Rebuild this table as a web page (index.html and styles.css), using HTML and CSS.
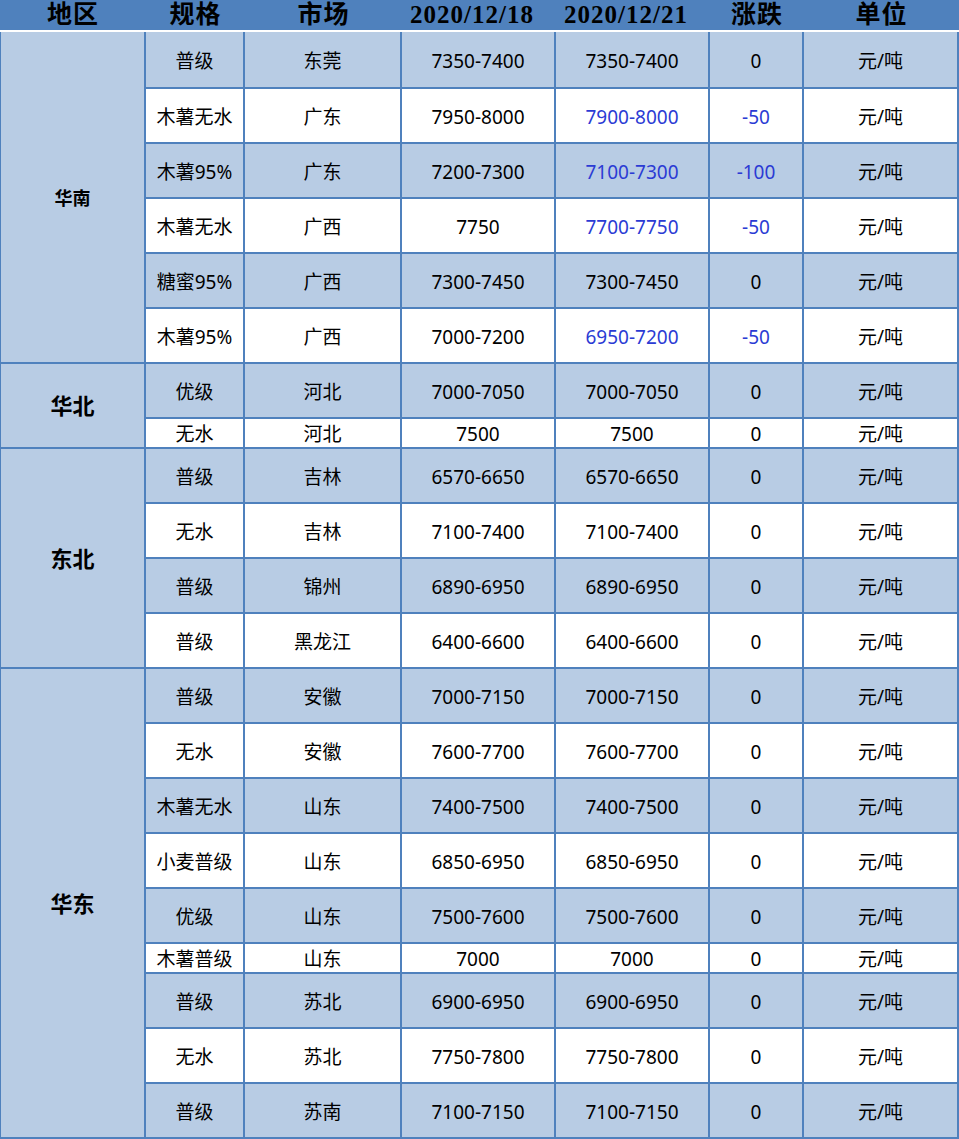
FILE: index.html
```html
<!DOCTYPE html>
<html lang="zh-CN">
<head>
<meta charset="utf-8">
<title>价格表</title>
<link rel="stylesheet" href="styles.css">
</head>
<body>
<div class="sheet">
  <div class="head">
    <div class="h">地区</div>
    <div class="h">规格</div>
    <div class="h">市场</div>
    <div class="h date">2020/12/18</div>
    <div class="h date">2020/12/21</div>
    <div class="h">涨跌</div>
    <div class="h">单位</div>
  </div>
  <div class="body">
    <div class="region small r6">华南</div>
    <div class="c alt">普级</div><div class="c alt">东莞</div><div class="c alt">7350-7400</div><div class="c alt">7350-7400</div><div class="c alt">0</div><div class="c alt last">元/吨</div>
    <div class="c">木薯无水</div><div class="c">广东</div><div class="c">7950-8000</div><div class="c blue">7900-8000</div><div class="c blue">-50</div><div class="c last">元/吨</div>
    <div class="c alt">木薯95%</div><div class="c alt">广东</div><div class="c alt">7200-7300</div><div class="c alt blue">7100-7300</div><div class="c alt blue">-100</div><div class="c alt last">元/吨</div>
    <div class="c">木薯无水</div><div class="c">广西</div><div class="c">7750</div><div class="c blue">7700-7750</div><div class="c blue">-50</div><div class="c last">元/吨</div>
    <div class="c alt">糖蜜95%</div><div class="c alt">广西</div><div class="c alt">7300-7450</div><div class="c alt">7300-7450</div><div class="c alt">0</div><div class="c alt last">元/吨</div>
    <div class="c">木薯95%</div><div class="c">广西</div><div class="c">7000-7200</div><div class="c blue">6950-7200</div><div class="c blue">-50</div><div class="c last">元/吨</div>

    <div class="region r2">华北</div>
    <div class="c alt">优级</div><div class="c alt">河北</div><div class="c alt">7000-7050</div><div class="c alt">7000-7050</div><div class="c alt">0</div><div class="c alt last">元/吨</div>
    <div class="c">无水</div><div class="c">河北</div><div class="c">7500</div><div class="c">7500</div><div class="c">0</div><div class="c last">元/吨</div>

    <div class="region r4">东北</div>
    <div class="c alt">普级</div><div class="c alt">吉林</div><div class="c alt">6570-6650</div><div class="c alt">6570-6650</div><div class="c alt">0</div><div class="c alt last">元/吨</div>
    <div class="c">无水</div><div class="c">吉林</div><div class="c">7100-7400</div><div class="c">7100-7400</div><div class="c">0</div><div class="c last">元/吨</div>
    <div class="c alt">普级</div><div class="c alt">锦州</div><div class="c alt">6890-6950</div><div class="c alt">6890-6950</div><div class="c alt">0</div><div class="c alt last">元/吨</div>
    <div class="c">普级</div><div class="c">黑龙江</div><div class="c">6400-6600</div><div class="c">6400-6600</div><div class="c">0</div><div class="c last">元/吨</div>

    <div class="region r9">华东</div>
    <div class="c alt">普级</div><div class="c alt">安徽</div><div class="c alt">7000-7150</div><div class="c alt">7000-7150</div><div class="c alt">0</div><div class="c alt last">元/吨</div>
    <div class="c">无水</div><div class="c">安徽</div><div class="c">7600-7700</div><div class="c">7600-7700</div><div class="c">0</div><div class="c last">元/吨</div>
    <div class="c alt">木薯无水</div><div class="c alt">山东</div><div class="c alt">7400-7500</div><div class="c alt">7400-7500</div><div class="c alt">0</div><div class="c alt last">元/吨</div>
    <div class="c">小麦普级</div><div class="c">山东</div><div class="c">6850-6950</div><div class="c">6850-6950</div><div class="c">0</div><div class="c last">元/吨</div>
    <div class="c alt">优级</div><div class="c alt">山东</div><div class="c alt">7500-7600</div><div class="c alt">7500-7600</div><div class="c alt">0</div><div class="c alt last">元/吨</div>
    <div class="c">木薯普级</div><div class="c">山东</div><div class="c">7000</div><div class="c">7000</div><div class="c">0</div><div class="c last">元/吨</div>
    <div class="c alt">普级</div><div class="c alt">苏北</div><div class="c alt">6900-6950</div><div class="c alt">6900-6950</div><div class="c alt">0</div><div class="c alt last">元/吨</div>
    <div class="c">无水</div><div class="c">苏北</div><div class="c">7750-7800</div><div class="c">7750-7800</div><div class="c">0</div><div class="c last">元/吨</div>
    <div class="c alt">普级</div><div class="c alt">苏南</div><div class="c alt">7100-7150</div><div class="c alt">7100-7150</div><div class="c alt">0</div><div class="c alt last">元/吨</div>
  </div>
</div>
</body>
</html>
```

FILE: styles.css
```css
* { box-sizing: border-box; }
html, body { margin: 0; padding: 0; background: #ffffff; }

.sheet {
  width: 959px;
}

.head, .body {
  display: grid;
  grid-template-columns: 146px 99px 157px 154px 154px 94px 155px;
}

.head {
  height: 32px;
  background: #4f81bd;
  border-bottom: 2px solid #ffffff;
}

.h {
  display: flex;
  align-items: center;
  justify-content: center;
  font-family: "Liberation Serif", "Noto Sans CJK SC", serif;
  font-weight: 700;
  font-size: 25px;
  letter-spacing: 1px;
  color: #000;
  line-height: 1;
  padding-bottom: 1px;
}

.h.date { padding-right: 14px; }

.body {
  grid-template-rows: 57px repeat(6, 55px) 30px repeat(9, 55px) 30px repeat(3, 55px);
}

.c, .region {
  display: flex;
  align-items: center;
  justify-content: center;
  padding-top: 3px;
  border-right: 2px solid #4f81bd;
  border-bottom: 2px solid #4f81bd;
  font-family: "Noto Sans", "Noto Sans CJK SC", sans-serif;
  font-size: 19px;
  color: #000;
  background: #ffffff;
  line-height: 1;
  white-space: nowrap;
}

.c.alt { background: #b8cce4; }
.c.blue { color: #2b3bd4; }
.c.last { border-right-width: 2px; }

.region {
  background: #b8cce4;
  border-left: 1px solid #4f81bd;
  font-family: "Liberation Serif", "Noto Sans CJK SC", serif;
  font-weight: 700;
  font-size: 22px;
}
.region.small { font-size: 18px; }
.r6 { grid-row: span 6; }
.r2 { grid-row: span 2; }
.r4 { grid-row: span 4; }
.r9 { grid-row: span 9; }
```
